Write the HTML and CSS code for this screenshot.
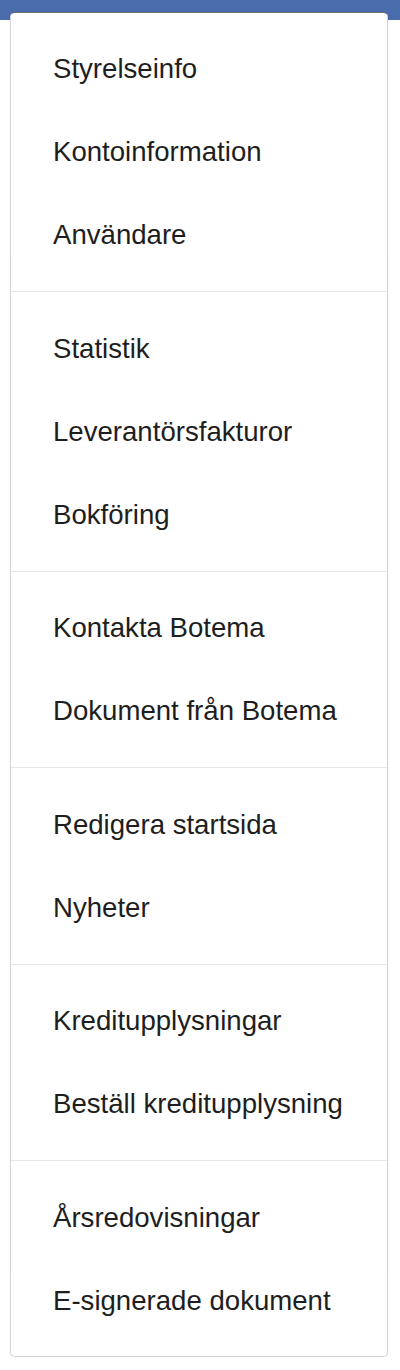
FILE: index.html
```
<!DOCTYPE html>
<html lang="sv">
<head>
<meta charset="utf-8">
<title>Meny</title>
<link rel="stylesheet" href="styles.css">
</head>
<body>
<div class="navbar"></div>
<ul class="menu">
  <li class="item">Styrelseinfo</li>
  <li class="item">Kontoinformation</li>
  <li class="item">Användare</li>
  <li class="divider"></li>
  <li class="item">Statistik</li>
  <li class="item">Leverantörsfakturor</li>
  <li class="item">Bokföring</li>
  <li class="divider"></li>
  <li class="item">Kontakta Botema</li>
  <li class="item">Dokument från Botema</li>
  <li class="divider"></li>
  <li class="item">Redigera startsida</li>
  <li class="item">Nyheter</li>
  <li class="divider"></li>
  <li class="item">Kreditupplysningar</li>
  <li class="item">Beställ kreditupplysning</li>
  <li class="divider"></li>
  <li class="item">Årsredovisningar</li>
  <li class="item">E-signerade dokument</li>
</ul>
</body>
</html>
```
FILE: styles.css
```
html, body {
  margin: 0;
  padding: 0;
  background: #ffffff;
}
body {
  font-family: "Liberation Sans", Arial, Helvetica, sans-serif;
  color: #1e1e1e;
}
.navbar {
  height: 20px;
  background: #4a6cad;
}
.menu {
  list-style: none;
  margin: -8px 12px 0 10px;
  padding: 14px 0;
  background: #ffffff;
  border: 1px solid rgba(0, 0, 0, 0.17);
  border-top-color: rgba(0, 0, 0, 0.55);
  border-radius: 5px;
  box-shadow: 0 0 2px rgba(0, 0, 0, 0.08);
  position: relative;
}
.item {
  height: 83px;
  line-height: 83px;
  padding-left: 42px;
  font-size: 27.6px;
  white-space: nowrap;
}
.divider {
  height: 1px;
  margin: 15px 0 14.5px;
  background: #e6e6ea;
}
```
